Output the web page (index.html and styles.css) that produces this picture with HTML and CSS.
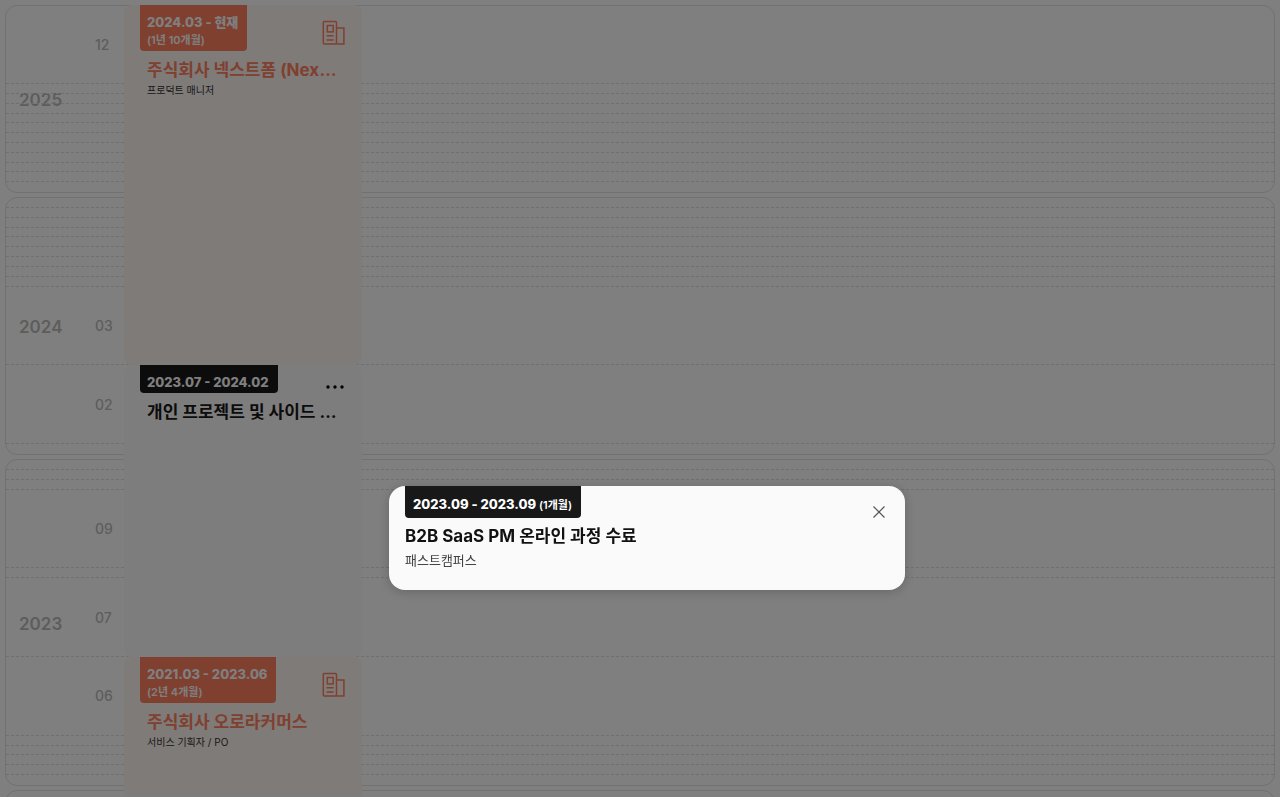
FILE: index.html
```html
<!DOCTYPE html>
<html lang="ko">
<head>
  <meta charset="UTF-8">
  <meta name="viewport" content="width=device-width, initial-scale=1.0">
  <title>Timeline</title>
  <link rel="stylesheet" href="styles.css">
</head>
<body>
<main class="timeline">
  <div class="years">
    <section class="year year-2025">
      <h2 class="year-label">2025</h2>
      <ol class="months">
        <li>12</li>
        <li></li><li></li><li></li><li></li><li></li><li></li><li></li><li></li><li></li><li></li><li></li>
      </ol>
    </section>
    <section class="year year-2024">
      <h2 class="year-label">2024</h2>
      <ol class="months">
        <li></li><li></li><li></li><li></li><li></li><li></li><li></li><li></li><li></li>
        <li>03</li>
        <li>02</li>
        <li></li>
      </ol>
    </section>
    <section class="year year-2023">
      <h2 class="year-label">2023</h2>
      <ol class="months">
        <li></li><li></li><li></li>
        <li>09</li>
        <li></li>
        <li>07</li>
        <li>06</li>
        <li></li><li></li><li></li><li></li><li></li>
      </ol>
    </section>
    <section class="year"></section>
  </div>

  <div class="cards">
    <article class="card work card-long">
      <header class="card-head">
        <p class="badge">2024.03 - 현재 <small>(1년 10개월)</small></p>
        <svg class="icon" viewBox="0 0 24 26" fill="none" stroke="currentColor" stroke-width="1.5">
          <rect x="1.3" y="1.6" width="13.200" height="22.500" rx="1"/>
          <path d="M14.500 7.900h7.400v16.200h-7.400"/>
          <rect x="5.300" y="5.500" width="5.900" height="6.400"/>
          <path d="M4.600 15.700h7M4.600 20h7"/>
        </svg>
      </header>
      <h3 class="title">주식회사 넥스트폼 (NextForm)</h3>
      <p class="role">프로덕트 매니저</p>
    </article>

    <article class="card etc">
      <header class="card-head">
        <p class="badge">2023.07 - 2024.02</p>
        <button class="more" type="button" aria-label="더보기">
          <svg viewBox="0 0 20 4" fill="currentColor"><circle cx="2" cy="2" r="1.700"/><circle cx="9" cy="2" r="1.700"/><circle cx="16" cy="2" r="1.700"/></svg>
        </button>
      </header>
      <h3 class="title">개인 프로젝트 및 사이드 프로젝트</h3>
    </article>

    <article class="card work">
      <header class="card-head">
        <p class="badge">2021.03 - 2023.06 <small>(2년 4개월)</small></p>
        <svg class="icon" viewBox="0 0 24 26" fill="none" stroke="currentColor" stroke-width="1.5">
          <rect x="1.3" y="1.6" width="13.200" height="22.500" rx="1"/>
          <path d="M14.500 7.900h7.400v16.200h-7.400"/>
          <rect x="5.300" y="5.500" width="5.900" height="6.400"/>
          <path d="M4.600 15.700h7M4.600 20h7"/>
        </svg>
      </header>
      <h3 class="title">주식회사 오로라커머스</h3>
      <p class="role">서비스 기획자 / PO</p>
    </article>
  </div>
</main>

<div class="backdrop"></div>
<div class="modal" role="dialog" aria-labelledby="modal-title">
  <header class="modal-head">
    <p class="badge">2023.09 - 2023.09 <small>(1개월)</small></p>
    <button class="close" type="button" aria-label="닫기">
      <svg viewBox="0 0 12 12" fill="none" stroke="currentColor" stroke-width="1.2"><path d="M.5.5l11 11M11.500.5l-11 11"/></svg>
    </button>
  </header>
  <h3 class="title" id="modal-title">B2B SaaS PM 온라인 과정 수료</h3>
  <p class="role">패스트캠퍼스</p>
</div>
</body>
</html>
```

FILE: styles.css
```css
* {
  box-sizing: border-box;
  margin: 0;
  padding: 0;
}
body {
  background: #fff;
  font-family: Inter, "Noto Sans CJK KR", sans-serif;
}
button {
  border: 0;
  background: none;
  cursor: pointer;
}
svg {
  display: block;
}

/* years and cards share one grid cell */
.timeline {
  display: grid;
  height: 100vh;
  padding: 5px;
  overflow: hidden;
}
.years,
.cards {
  grid-area: 1 / 1;
}
.years {
  display: flex;
  flex-direction: column;
  gap: 4px;
}
.year {
  display: grid;
  flex-shrink: 0;
  align-items: center;
  height: 188px;
  border: 1px solid #e2e2e2;
  border-radius: 12px;
}
.year-2024 {
  height: 258px;
}
.year-2023 {
  height: 327px;
}
.year-label {
  grid-area: 1 / 1;
  padding: 2px 0 0 13px;
  color: #bbb;
  font-size: 17px;
  font-weight: 600;
}
/* months with a start or an end in them are eight times taller */
.months {
  grid-area: 1 / 1;
  display: grid;
  height: 100%;
  list-style: none;
}
.year-2025 .months {
  grid-template-rows: 8fr repeat(11, 1fr);
}
.year-2024 .months {
  grid-template-rows: repeat(9, 1fr) 8fr 8fr 1fr;
}
.year-2023 .months {
  grid-template-rows: repeat(3, 1fr) 8fr 1fr 8fr 8fr repeat(5, 1fr);
}
.months li {
  display: flex;
  align-items: center;
  padding-left: 89px;
  border-bottom: 1px dashed #dfdfdf;
  color: #bbb;
  font-size: 14px;
  font-weight: 500;
}
.months li:last-child {
  border-bottom: 0;
}

.cards {
  width: 238px;
  margin-left: 119px;
}
.card {
  height: 292px;
  padding: 0 16px;
  border-radius: 8px;
}
.card-long {
  height: 360px;
}
.work {
  background: #fff7f1;
  color: #ff805f;
}
.etc {
  background: #fafafa;
  color: #181818;
}
.card-head {
  display: flex;
  justify-content: space-between;
  align-items: flex-start;
}
.badge {
  padding: 8px 9px 2px 7px;
  border-radius: 0 0 4px 4px;
  background: #181818;
  color: #fff;
  font-size: 13px;
  font-weight: 800;
  line-height: 18px;
}
.badge small {
  font-size: 11px;
  font-weight: 600;
}
.card .badge small {
  display: block;
}
.work .badge {
  background: #ff805f;
}
.icon {
  width: 24px;
  height: 26px;
  margin-top: 15px;
}
.more {
  padding: 20px 0 4px;
}
.more svg {
  width: 20px;
  height: 4px;
}
.title {
  overflow: hidden;
  font-size: 17px;
  font-weight: 700;
  line-height: 24px;
  text-overflow: ellipsis;
  white-space: nowrap;
}
.card .title {
  margin: 7px 7px 0;
}
.card .role {
  padding: 0 7px;
  color: #333;
  font-size: 10px;
  line-height: 16px;
}

.backdrop {
  position: fixed;
  inset: 0;
  background: rgba(0, 0, 0, .5);
}
.modal {
  position: fixed;
  top: 486px;
  left: 389px;
  width: 516px;
  padding: 0 16px 20px;
  border-radius: 16px;
  background: #fafafa;
  box-shadow: 0 2px 12px rgba(0, 0, 0, .2);
  color: #111;
}
.modal-head {
  display: flex;
  justify-content: space-between;
  align-items: flex-start;
}
.modal .badge {
  padding: 9px 9px 4px 8px;
}
.close {
  padding: 20px 4px 0;
  color: #555;
}
.close svg {
  width: 12px;
  height: 12px;
}
.modal .title {
  margin-top: 6px;
}
.modal .role {
  margin-top: 3px;
  color: #444;
  font-size: 13px;
  line-height: 19px;
}
```
